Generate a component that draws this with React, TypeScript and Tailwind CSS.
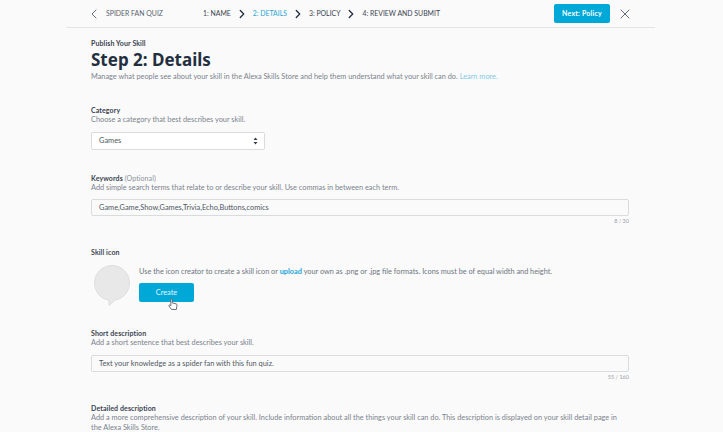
import { ChevronLeft, ChevronRight, X } from "lucide-react"

const font = { fontFamily: 'Lato, "Liberation Sans", sans-serif' }

function Crumb({ label, active }: { label: string; active?: boolean }) {
  return (
    <span className={active ? "text-[#2ea6d6]" : "text-[#3b4450]"}>{label}</span>
  )
}

function Arrow() {
  return <ChevronRight className="w-[14px] h-[14px] text-[#232f3e] mx-[4px]" strokeWidth={2.2} />
}

function FieldHead({ label, help, optional }: { label: string; help: string; optional?: boolean }) {
  return (
    <div>
      <div className="text-[7px] leading-[10px] font-bold text-[#3a4450] tracking-[0.1px]">
        {label}
        {optional && <span className="font-normal text-[#8a929b]"> (Optional)</span>}
      </div>
      <div className="text-[7.35px] leading-[10px] text-[#7b838d]">{help}</div>
    </div>
  )
}

function TextField({ value, count }: { value: string; count: string }) {
  return (
    <div>
      <div className="h-[17px] border border-[#d9dcdf] rounded-[2px] flex items-center pl-[7px] text-[7.4px] text-[#4f5862]">
        {value}
      </div>
      <div className="text-right text-[5.5px] leading-[8px] mt-[1px] text-[#9aa1a8]">{count}</div>
    </div>
  )
}

export default function App() {
  return (
    <div className="w-[723px] h-[432px] overflow-hidden bg-[#fafafa]" style={font}>
      <div className="w-[589px] ml-[66px]">
        {/* Top bar */}
        <header className="h-[28px] border-b border-[#e3e4e6] flex items-center pl-[20px] text-[6.9px]">
          <ChevronLeft className="w-[16px] h-[16px] text-[#596270]" strokeWidth={1.4} />
          <span className="ml-[4px] w-[97px] text-[#596270]">SPIDER FAN QUIZ</span>
          <Crumb label="1: NAME" />
          <Arrow />
          <Crumb label="2: DETAILS" active />
          <Arrow />
          <Crumb label="3: POLICY" />
          <Arrow />
          <Crumb label="4: REVIEW AND SUBMIT" />
          <button className="ml-auto mb-[1px] w-[56px] h-[19px] rounded-[2px] bg-[#00a8d8] text-white font-bold text-[7px] tracking-[0.2px]">
            Next: Policy
          </button>
          <X className="w-[16px] h-[16px] ml-[7px] mr-[22px] text-[#4a5360]" strokeWidth={1.3} />
        </header>

        <main className="pl-[25px] pr-[26px]">
          <div className="mt-[11px] text-[7px] leading-[9px] font-bold text-[#3a4450] tracking-[0.1px]">Publish Your Skill</div>
          <h1 className="text-[17px] leading-[24px] font-bold text-[#232f3e]" style={{ fontFamily: '"Noto Sans", sans-serif' }}>
            Step 2: Details
          </h1>
          <p className="text-[7.35px] leading-[10px] text-[#7b838d]">
            Manage what people see about your skill in the Alexa Skills Store and help them understand what your skill can do.{" "}
            <span className="text-[#7fcbe8]">Learn more.</span>
          </p>

          {/* Category */}
          <section className="mt-[23px]">
            <FieldHead label="Category" help="Choose a category that best describes your skill." />
            <div className="mt-[7px] w-[174px] h-[18px] bg-white border border-[#d9dcdf] rounded-[2px] flex items-center justify-between pl-[7px] pr-[6px] text-[7.4px] text-[#4f5862]">
              Games
              <svg width="5" height="8" viewBox="0 0 5 8" fill="#333e48">
                <path d="M2.5 0.5 4.5 3H0.5Z" />
                <path d="M2.5 7.5 0.5 5H4.5Z" />
              </svg>
            </div>
          </section>

          {/* Keywords */}
          <section className="mt-[23px]">
            <FieldHead
              label="Keywords"
              optional
              help="Add simple search terms that relate to or describe your skill. Use commas in between each term."
            />
            <div className="mt-[6px]">
              <TextField value="Game,Game,Show,Games,Trivia,Echo,Buttons,comics" count="8 / 30" />
            </div>
          </section>

          {/* Skill icon */}
          <section className="mt-[22px]">
            <div className="text-[7px] leading-[10px] font-bold text-[#3a4450] tracking-[0.1px]">Skill icon</div>
            <div className="mt-[3px] flex">
              <svg width="36" height="41" viewBox="0 0 36 41" className="ml-[3px] shrink-0 mt-[5px]">
                <path
                  d="M18 0.5C27.7 0.5 35.5 8.3 35.5 18C35.5 26.5 29.5 33.5 21 35L15 40.5V35.2C6.8 33.8 0.5 26.8 0.5 18C0.5 8.3 8.3 0.5 18 0.5Z"
                  fill="#e8e8e8"
                  stroke="#dedede"
                />
              </svg>
              <div className="ml-[9px]">
                <p className="mt-[7px] text-[7.35px] leading-[10px] text-[#6d7580]">
                  Use the icon creator to create a skill icon or{" "}
                  <span className="font-bold text-[#1ea4d4]">upload</span> your own as .png or .jpg file formats.
                  Icons must be of equal width and height.
                </p>
                <div className="relative mt-[6px] w-[55px]">
                  <button className="block w-[55px] h-[19px] rounded-[2px] bg-[#00a8d8] text-[#e6f7fc] text-[7.4px]">Create</button>
                  <svg width="10" height="13" viewBox="0 0 9 12" className="absolute left-[29px] top-[15px]">
                    <path
                      d="M2.5 1.2C2.5 0.4 3.8 0.4 3.8 1.2V4.6L7.4 5.4C8 5.6 8.3 6 8.2 6.6L7.6 10.6H3.2L0.8 7.4C0.4 6.7 1.3 6 2 6.6L2.5 7.2Z"
                      fill="#fff"
                      stroke="#555d66"
                      strokeWidth="0.8"
                    />
                  </svg>
                </div>
              </div>
            </div>
          </section>

          {/* Short description */}
          <section className="mt-[22px]">
            <FieldHead label="Short description" help="Add a short sentence that best describes your skill." />
            <div className="mt-[7px]">
              <TextField value="Text your knowledge as a spider fan with this fun quiz." count="55 / 160" />
            </div>
          </section>

          {/* Detailed description */}
          <section className="mt-[22px] pr-[4px]">
            <FieldHead
              label="Detailed description"
              help="Add a more comprehensive description of your skill. Include information about all the things your skill can do. This description is displayed on your skill detail page in the Alexa Skills Store."
            />
          </section>
        </main>
      </div>
    </div>
  )
}
